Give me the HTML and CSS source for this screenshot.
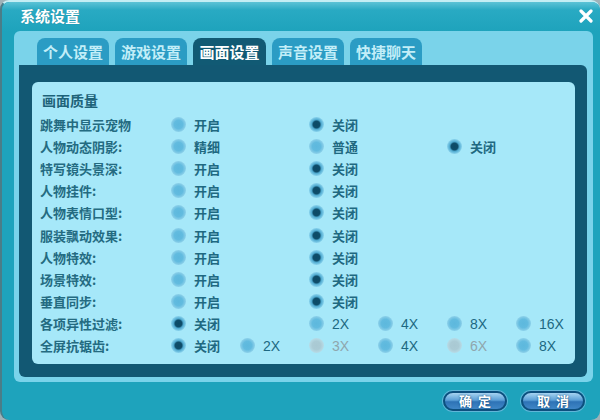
FILE: index.html
```html
<!DOCTYPE html>
<html lang="zh">
<head>
<meta charset="utf-8">
<title>系统设置</title>
<link rel="stylesheet" href="styles.css">
</head>
<body>
<div class="window">
  <div class="titlebar">
    <span class="title">系统设置</span>
    <svg class="close" width="14" height="14" viewBox="0 0 14 14"><path d="M2 2 L12 12 M12 2 L2 12" stroke="#fff" stroke-width="3.2" stroke-linecap="round"/></svg>
  </div>
  <div class="panel">
    <div class="tabs">
      <div class="tab">个人设置</div>
      <div class="tab">游戏设置</div>
      <div class="tab active">画面设置</div>
      <div class="tab">声音设置</div>
      <div class="tab">快捷聊天</div>
    </div>
    <div class="navy">
      <div class="content">
        <div class="heading">画面质量</div>
        <div class="rows">
          <div class="row"><span class="label">跳舞中显示宠物</span><span class="opt c1"><i class="radio"></i>开启</span><span class="opt c3"><i class="radio on"></i>关闭</span></div>
          <div class="row"><span class="label">人物动态阴影:</span><span class="opt c1"><i class="radio"></i>精细</span><span class="opt c3"><i class="radio"></i>普通</span><span class="opt c5"><i class="radio on"></i>关闭</span></div>
          <div class="row"><span class="label">特写镜头景深:</span><span class="opt c1"><i class="radio"></i>开启</span><span class="opt c3"><i class="radio on"></i>关闭</span></div>
          <div class="row"><span class="label">人物挂件:</span><span class="opt c1"><i class="radio"></i>开启</span><span class="opt c3"><i class="radio on"></i>关闭</span></div>
          <div class="row"><span class="label">人物表情口型:</span><span class="opt c1"><i class="radio"></i>开启</span><span class="opt c3"><i class="radio on"></i>关闭</span></div>
          <div class="row"><span class="label">服装飘动效果:</span><span class="opt c1"><i class="radio"></i>开启</span><span class="opt c3"><i class="radio on"></i>关闭</span></div>
          <div class="row"><span class="label">人物特效:</span><span class="opt c1"><i class="radio"></i>开启</span><span class="opt c3"><i class="radio on"></i>关闭</span></div>
          <div class="row"><span class="label">场景特效:</span><span class="opt c1"><i class="radio"></i>开启</span><span class="opt c3"><i class="radio on"></i>关闭</span></div>
          <div class="row"><span class="label">垂直同步:</span><span class="opt c1"><i class="radio"></i>开启</span><span class="opt c3"><i class="radio on"></i>关闭</span></div>
          <div class="row"><span class="label">各项异性过滤:</span><span class="opt c1"><i class="radio on"></i>关闭</span><span class="opt c3 num"><i class="radio"></i>2X</span><span class="opt c4 num"><i class="radio"></i>4X</span><span class="opt c5 num"><i class="radio"></i>8X</span><span class="opt c6 num"><i class="radio"></i>16X</span></div>
          <div class="row"><span class="label">全屏抗锯齿:</span><span class="opt c1"><i class="radio on"></i>关闭</span><span class="opt c2 num"><i class="radio"></i>2X</span><span class="opt c3 num off"><i class="radio"></i>3X</span><span class="opt c4 num"><i class="radio"></i>4X</span><span class="opt c5 num off"><i class="radio"></i>6X</span><span class="opt c6 num"><i class="radio"></i>8X</span></div>
        </div>
      </div>
    </div>
  </div>
  <div class="footer">
    <button class="btn">确定</button>
    <button class="btn">取消</button>
  </div>
</div>
</body>
</html>
```
FILE: styles.css
```css
* { box-sizing: border-box; }
html, body { margin: 0; padding: 0; }
body {
  width: 600px;
  height: 420px;
  background: #9fb2b8;
  font-family: "Noto Sans CJK SC", "Noto Sans", sans-serif;
  overflow: hidden;
}
.window {
  width: 600px;
  height: 420px;
  background: #1ea3bc;
  border-radius: 9px;
  border-left: 2px solid #4a7d88;
  border-top: 2px solid #c4eef4;
  display: flex;
  flex-direction: column;
}
.titlebar {
  height: 29px;
  display: flex;
  align-items: center;
  justify-content: space-between;
  padding: 0 7px 0 18px;
  background: linear-gradient(#5cc3d6 0, #29aac3 8px, #1ea3bc 100%);
  border-radius: 8px 8px 0 0;
}
.title {
  color: #fff;
  font-size: 15px;
  font-weight: 700;
  line-height: 20px;
  margin-top: -2px;
  text-shadow: 0 0 1px rgba(0,60,80,0.4);
}
.close { margin-top: -1px; }
.panel {
  margin: 0 7px 0 12px;
  background: #7ad3ea;
  border-radius: 6px;
  padding: 6px 6px 5px 5px;
}
.tabs {
  display: flex;
  gap: 6px;
  padding-left: 18px;
  height: 28px;
  align-items: flex-end;
}
.tab {
  width: 72px;
  height: 27px;
  background: #2b9cc4;
  border-radius: 8px 8px 0 0;
  color: #c2eef8;
  font-size: 15px;
  font-weight: 700;
  text-align: center;
  line-height: 27px;
}
.tab.active {
  background: #115a74;
  color: #fff;
  width: 73px;
}
.navy {
  background: #125873;
  border-radius: 0 6px 6px 6px;
  padding: 17px 12px 13px 13px;
}
.content {
  background: #a6e8f9;
  border-radius: 6px;
  height: 282px;
  padding: 8px 0 0 8px;
}
.heading {
  font-size: 14px;
  font-weight: 700;
  line-height: 20px;
  color: #1e6379;
  padding-left: 2px;
}
.rows { margin-top: 3px; }
.row {
  display: grid;
  grid-template-columns: 131px repeat(6, 69px);
  height: 22.2px;
  align-items: center;
}
.label {
  font-size: 13px;
  font-weight: 700;
  color: #246b81;
  grid-column: 1;
  white-space: nowrap;
}
.opt {
  display: flex;
  align-items: center;
  gap: 8px;
  font-size: 13px;
  font-weight: 700;
  color: #1f6981;
  white-space: nowrap;
}
.c1 { grid-column: 2; }
.c2 { grid-column: 3; }
.c3 { grid-column: 4; }
.c4 { grid-column: 5; }
.c5 { grid-column: 6; }
.c6 { grid-column: 7; }
.num {
  font-family: "Liberation Sans", Arial, sans-serif;
  font-weight: 400;
  font-size: 14px;
  color: #1d6882;
}
.radio {
  display: inline-block;
  width: 15px;
  height: 15px;
  border-radius: 50%;
  flex: none;
  background: radial-gradient(circle, #5db8dd 0, #62bbdf 40%, #86cde8 65%, rgba(160,225,245,0) 100%);
}
.radio.on {
  background: radial-gradient(circle, #0c4a66 0, #0e4d6a 32%, #4ea9cf 45%, #7ecbe8 65%, rgba(160,225,245,0) 100%);
}
.off { color: #8fa6ad; }
.off .radio {
  background: radial-gradient(circle, #a9c9d3 0, #abcbd5 40%, #b5d9e4 65%, rgba(170,225,240,0) 100%);
}
.footer {
  display: flex;
  justify-content: flex-end;
  gap: 14px;
  padding: 9px 15px 0 0;
}
.btn {
  width: 64px;
  height: 20px;
  border-radius: 10px;
  border: 2px solid #0d4f7e;
  background: linear-gradient(#a6d4f2 0, #5b9fd6 45%, #2e73b6 55%, #3f86c6 100%);
  color: #fff;
  font-family: "Noto Sans CJK SC", sans-serif;
  font-size: 13px;
  font-weight: 700;
  letter-spacing: 6px;
  text-indent: 6px;
  line-height: 16px;
  padding: 0;
  box-shadow: 0 0 0 1px #5fb6d8;
  text-shadow: 0 0 2px #0b3d66;
}
```
